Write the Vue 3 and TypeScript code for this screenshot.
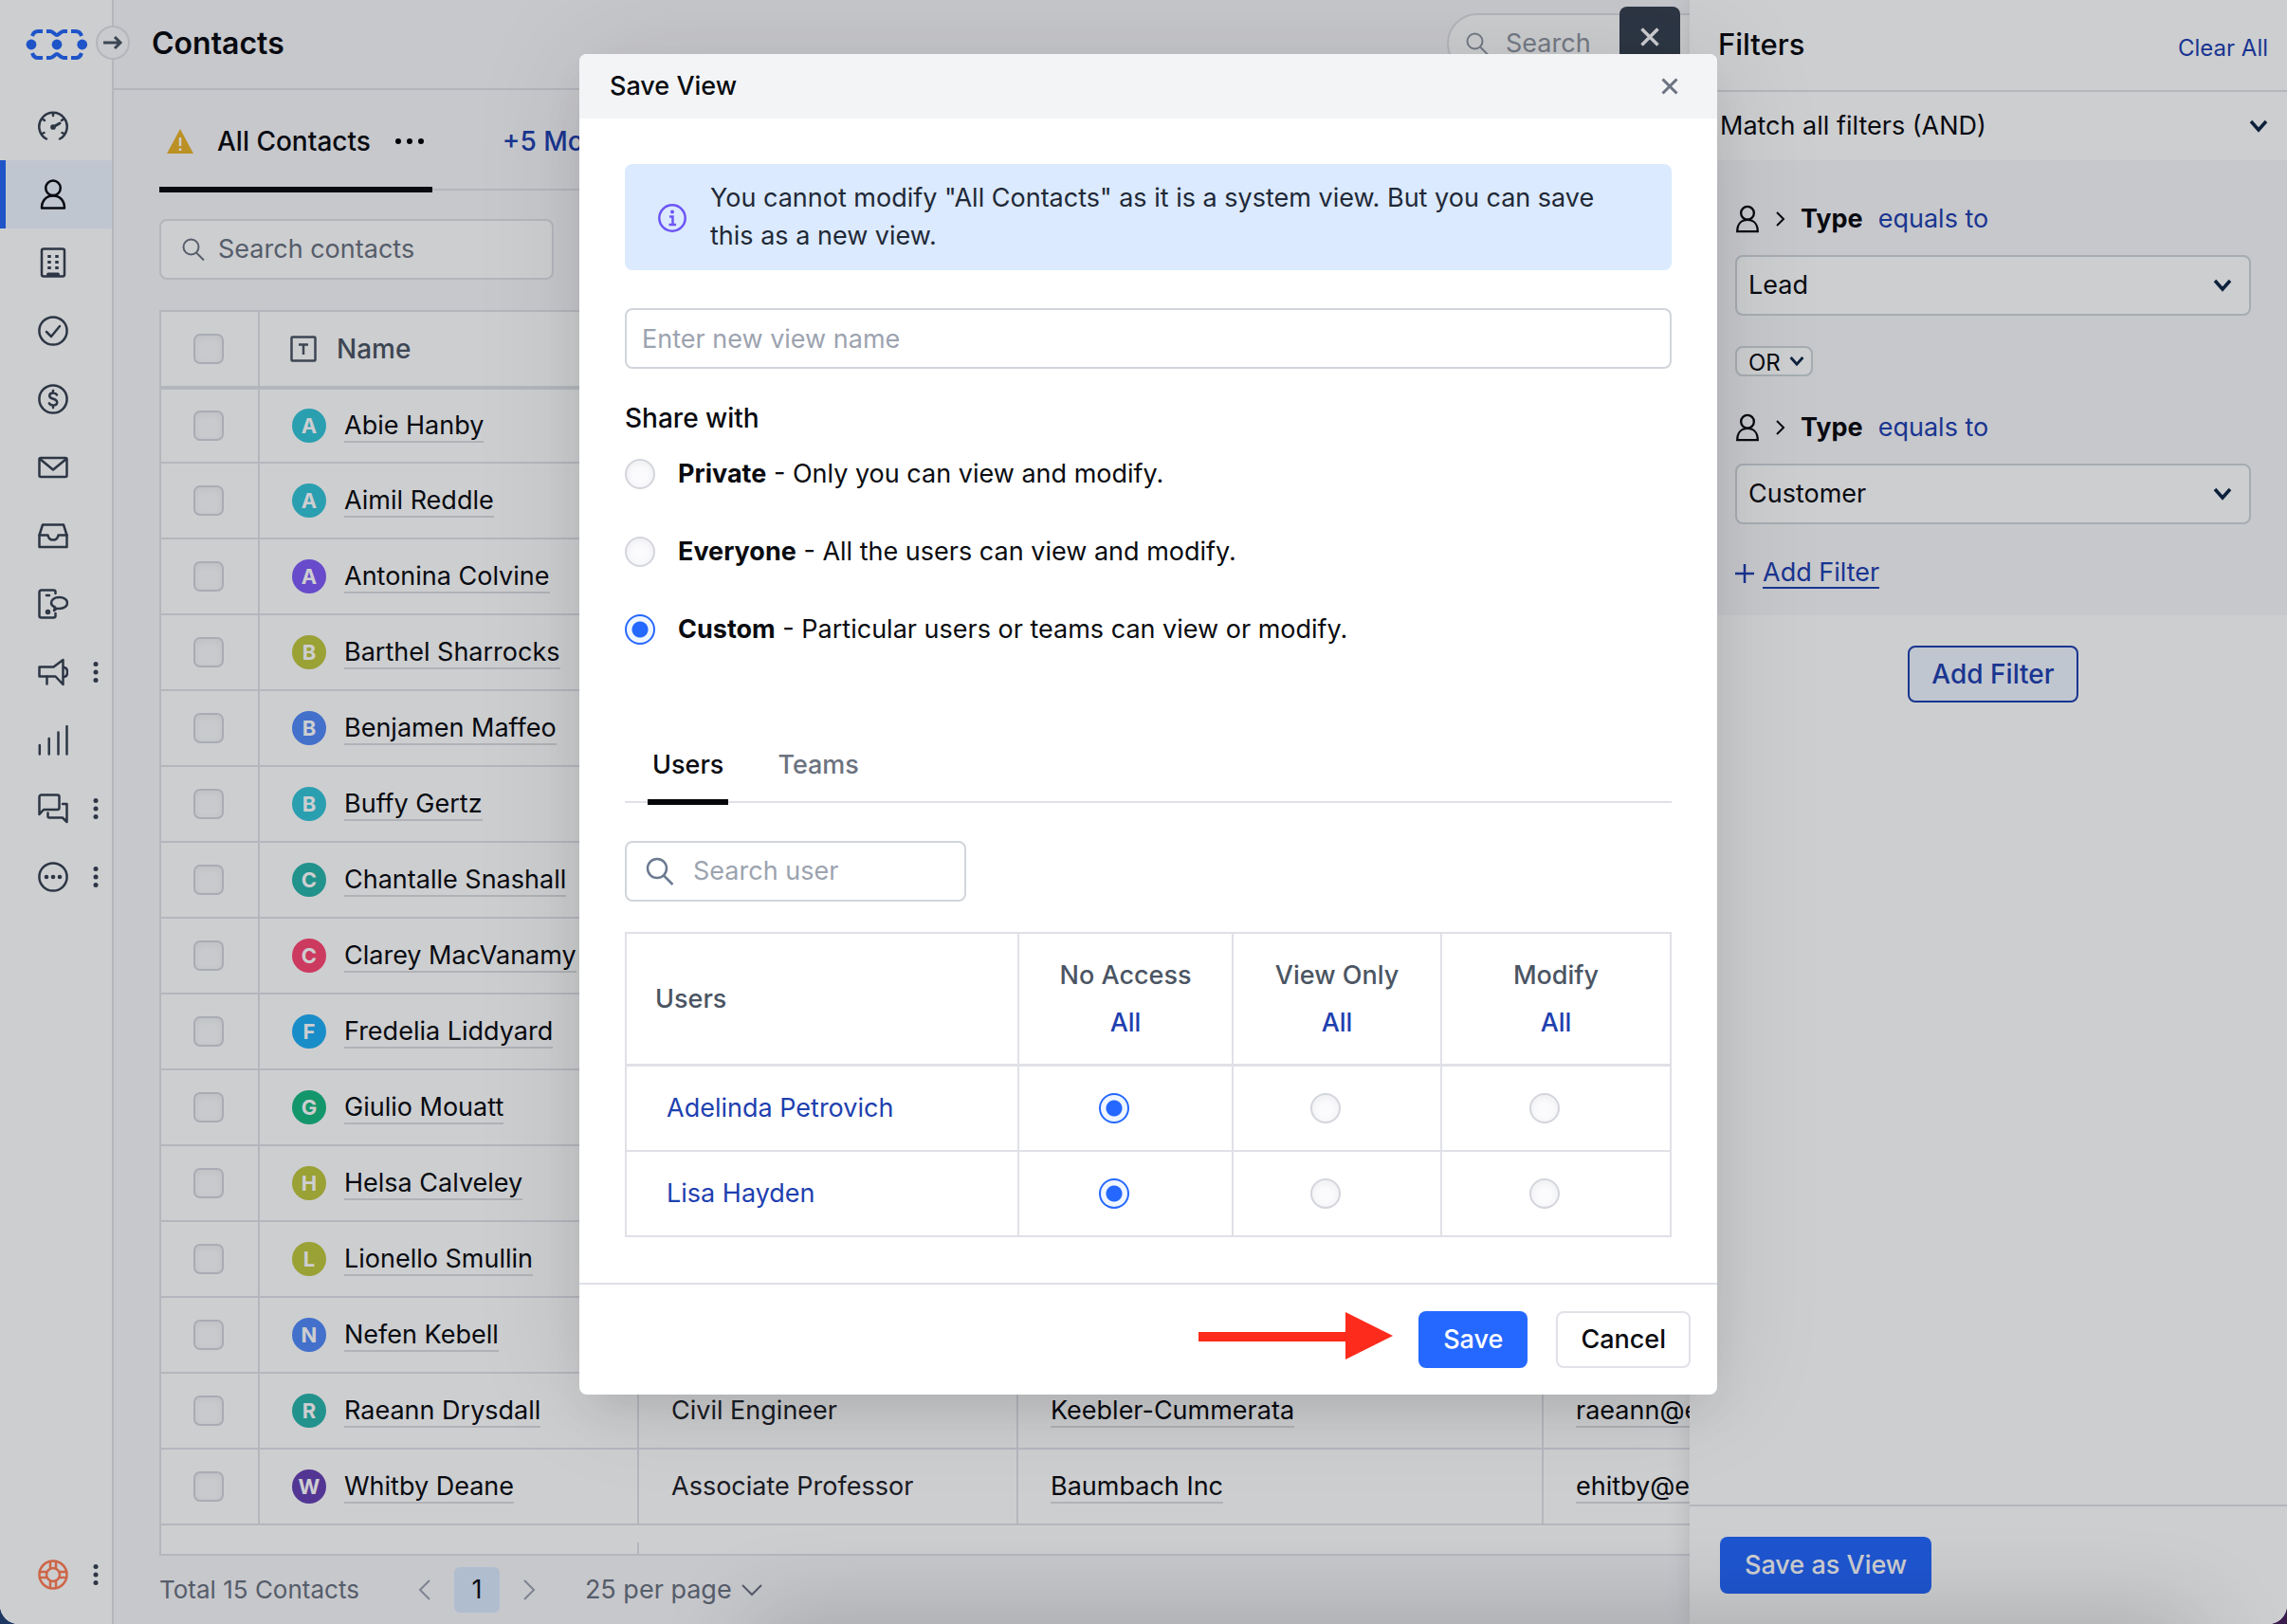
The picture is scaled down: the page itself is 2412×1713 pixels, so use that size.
<script setup lang="ts">
import { ref } from 'vue'

interface Contact {
  name: string
  color: string
  title?: string
  company?: string
  email?: string
}

const contacts: Contact[] = [
  { name: 'Abie Hanby', color: '#34c5d8' },
  { name: 'Aimil Reddle', color: '#34c5d8' },
  { name: 'Antonina Colvine', color: '#805cf8' },
  { name: 'Barthel Sharrocks', color: '#c0c73e' },
  { name: 'Benjamen Maffeo', color: '#528af9' },
  { name: 'Buffy Gertz', color: '#34c5d8' },
  { name: 'Chantalle Snashall', color: '#2ab5aa' },
  { name: 'Clarey MacVanamy', color: '#ff4673' },
  { name: 'Fredelia Liddyard', color: '#1eaef5' },
  { name: 'Giulio Mouatt', color: '#18b981' },
  { name: 'Helsa Calveley', color: '#c0c73e' },
  { name: 'Lionello Smullin', color: '#c0c73e' },
  { name: 'Nefen Kebell', color: '#528af9' },
  { name: 'Raeann Drysdall', color: '#2ab5aa', title: 'Civil Engineer', company: 'Keebler-Cummerata', email: 'raeann@example.com' },
  { name: 'Whitby Deane', color: '#6742b5', title: 'Associate Professor', company: 'Baumbach Inc', email: 'ehitby@example.com' },
]

interface NavItem {
  label: string
  icon: string
  active?: boolean
  menu?: boolean
}

const navItems: NavItem[] = [
  { label: 'Dashboard', icon: '<path d="M9 29.5A14.7 14.7 0 1 1 23 29.5"/><path d="M16 17l7-4" stroke-width="3"/><circle cx="16" cy="17" r="1.6" fill="currentColor"/><path d="M16 2.5v2.500M5.500 9l1.500 1M26.500 9L25 10M4.500 24l2-1M27.500 24l-2-1"/>' },
  { label: 'Contacts', icon: '<circle cx="16" cy="9.300" r="7.800"/><path d="M4 30.500c0-7.500 4.500-13 12-13s12 5.500 12 13z"/>', active: true },
  { label: 'Companies', icon: '<rect x="4" y="1.500" width="24" height="29" rx="2"/><path d="M12 8v3M20 8v3M12 14v3M20 14v3M12 20v3M20 20v3" stroke-width="3.500" stroke-linecap="butt"/><path d="M11 28.500h10" stroke-width="4"/>' },
  { label: 'Activities', icon: '<circle cx="16" cy="16" r="14.600"/><path d="M9 17l5 5 9-11"/>' },
  { label: 'Deals', icon: '<circle cx="16" cy="16" r="14.600"/><path d="M20 11.500c-.8-1.300-2.200-2-4-2-2.200 0-3.800 1.200-3.800 3 0 4.200 8 2.400 8 6.700 0 2-1.700 3.300-4.200 3.300-2 0-3.600-.8-4.200-2.200M16 7v2.500M16 22.500V25"/>' },
  { label: 'Mail', icon: '<rect x="1.500" y="6" width="29" height="20" rx="1.500"/><path d="M2 7l14 11.500L30 7"/>' },
  { label: 'Inbox', icon: '<path d="M1.500 15.500L5 4.500h22l3.500 11V28h-29z"/><path d="M1.500 15.500h9c.5 3 2.500 5 5.500 5s5-2 5.500-5h9"/>' },
  { label: 'Messages', icon: '<path d="M18.500 5V3.500a2 2 0 0 0-2-2h-13a2 2 0 0 0-2 2v25a2 2 0 0 0 2 2h13a2 2 0 0 0 2-2V26M9 7h3"/><path d="M17 23l1-3.500c-2.500-1-4-2.500-4-4.500 0-3.500 3.500-6 8.500-6s8.500 2.500 8.500 6-3.500 6-8.500 6c-1 0-2 0-2.500-.3z"/><circle cx="10.500" cy="24.500" r="1.500"/>' },
  { label: 'Campaigns', icon: '<path d="M1.500 10.500h15L26.500 3v26l-8-8.500h-17z"/><path d="M9.500 20.500v8M27 11c2.500 0 4 2 4 5s-1.500 5-4 5"/>', menu: true },
  { label: 'Reports', icon: '<path d="M1.800 30.500V21M11.700 30.500V14M21.500 30.500V7.500M30.500 30.500V1"/>' },
  { label: 'Conversations', icon: '<path d="M1.500 22V3.500a2 2 0 0 1 2-2h17a2 2 0 0 1 2 2v11.500a2 2 0 0 1-2 2H6z"/><path d="M26 11h4.500v19l-4.500-4.500H12a1.500 1.500 0 0 1-1.500-1.500v-3.500"/>', menu: true },
  { label: 'More', icon: '<circle cx="16" cy="16" r="14.600"/><g fill="currentColor" stroke="none"><circle cx="9" cy="16" r="2.300"/><circle cx="16" cy="16" r="2.300"/><circle cx="23" cy="16" r="2.300"/></g>', menu: true },
]

const shareOptions = [
  { value: 'private', name: 'Private', text: 'Only you can view and modify.' },
  { value: 'everyone', name: 'Everyone', text: 'All the users can view and modify.' },
  { value: 'custom', name: 'Custom', text: 'Particular users or teams can view or modify.' },
]

const accessLevels = ['No Access', 'View Only', 'Modify']
const users = ref([
  { name: 'Adelinda Petrovich', access: 'No Access' },
  { name: 'Lisa Hayden', access: 'No Access' },
])

const share = ref('custom')
const viewName = ref('')
const tab = ref('Users')
const filters = ref(['Lead', 'Customer'])

function setAll(level: string) {
  users.value.forEach((user) => (user.access = level))
}
</script>

<template>
  <div class="app">
    <aside class="sidebar">
      <div class="brand">
        <svg class="logo" width="66" height="36" viewBox="27 29 66 36" fill="none" stroke="#2567f5" stroke-width="4">
          <path d="M34 38c1-3 3-5 6-5h5M49 33h4c3 0 5 4 7 4s4-4 7-4h4M75 33h5c3 0 5 2 6 5M34 56c1 3 3 5 6 5h5M49 61h4c3 0 5-4 7-4s4 4 7 4h4M75 61h5c3 0 5-2 6-5" />
          <g fill="#2567f5" stroke="none"><circle cx="33" cy="47" r="5.400" /><circle cx="60" cy="47" r="5.400" /><circle cx="86.700" cy="47" r="5.400" /></g>
        </svg>
        <button class="expand" aria-label="Expand menu">
          <svg width="22" height="16" viewBox="0 0 22 16" fill="none" stroke="#4b5563" stroke-width="3"><path d="M1 8h18M13 2l6 6-6 6" /></svg>
        </button>
      </div>
      <nav>
        <a v-for="item in navItems" :key="item.label" href="#" class="nav-item" :class="{ active: item.active }" :aria-label="item.label">
          <svg class="line-icon" width="32" height="32" viewBox="0 0 32 32" v-html="item.icon" />
          <svg v-if="item.menu" class="kebab" width="6" height="24" viewBox="0 0 6 24"><circle cx="3" cy="3.500" r="2.500" /><circle cx="3" cy="12" r="2.500" /><circle cx="3" cy="20.500" r="2.500" /></svg>
        </a>
      </nav>
      <a href="#" class="nav-item help" aria-label="Help">
        <svg class="line-icon" width="32" height="32" viewBox="0 0 32 32">
          <circle cx="16" cy="16" r="14.500" /><circle cx="16" cy="16" r="7" />
          <path d="M13 2v7.500M19 2v7.500M13 22.500V30M19 22.500V30M2 13h7.500M2 19h7.500M22.500 13H30M22.500 19H30" />
        </svg>
        <svg class="kebab" width="6" height="24" viewBox="0 0 6 24"><circle cx="3" cy="3.500" r="2.500" /><circle cx="3" cy="12" r="2.500" /><circle cx="3" cy="20.500" r="2.500" /></svg>
      </a>
    </aside>

    <main class="main">
      <header class="topbar">
        <h1>Contacts</h1>
        <label class="global-search">
          <svg width="24" height="24" viewBox="0 0 24 24" fill="none" stroke="currentColor" stroke-width="2"><circle cx="9.500" cy="9.500" r="8" /><path d="M15 15.500l8 8" /></svg>
          <input type="search" placeholder="Search" aria-label="Search">
        </label>
      </header>

      <section class="content">
        <div class="tabs">
          <button class="tab">
            <svg width="28" height="28" viewBox="0 0 28 28"><path d="M14 1L28 27H0z" fill="#e9b32a" /><path d="M14 10v9M14 21.500v2.500" stroke="#fff" stroke-width="2.500" /></svg>
            <span>All Contacts</span>
            <svg width="32" height="8" viewBox="0 0 32 8"><circle cx="4" cy="4" r="3" /><circle cx="16" cy="4" r="3" /><circle cx="28" cy="4" r="3" /></svg>
          </button>
          <button class="more-tabs">+5 More</button>
        </div>

        <label class="contact-search">
          <svg width="24" height="24" viewBox="0 0 24 24" fill="none" stroke="currentColor" stroke-width="2"><circle cx="9.500" cy="9.500" r="8" /><path d="M15 15.500l8 8" /></svg>
          <input type="search" placeholder="Search contacts" aria-label="Search contacts">
        </label>

        <div class="grid">
          <table>
            <colgroup><col class="c-check"><col class="c-name"><col class="c-name"><col class="c-company"><col></colgroup>
            <thead>
              <tr>
                <th><input type="checkbox" aria-label="Select all"></th>
                <th>
                  <div class="name-cell head">
                    <svg width="28" height="28" viewBox="0 0 28 28" fill="none" stroke="currentColor" stroke-width="2.500"><rect x="1.500" y="1.500" width="25" height="25" rx="1" /><path d="M9 9.500h10M14 9.500V20" /></svg>
                    Name
                  </div>
                </th>
                <th /><th /><th />
              </tr>
            </thead>
            <tbody>
              <tr v-for="contact in contacts" :key="contact.name">
                <td><input type="checkbox" :aria-label="contact.name"></td>
                <td>
                  <div class="name-cell">
                    <span class="avatar" :style="{ background: contact.color }">{{ contact.name[0] }}</span>
                    <a href="#">{{ contact.name }}</a>
                  </div>
                </td>
                <td class="job">{{ contact.title }}</td>
                <td><a v-if="contact.company" href="#">{{ contact.company }}</a></td>
                <td><a v-if="contact.email" href="#">{{ contact.email }}</a></td>
              </tr>
            </tbody>
          </table>
          <div class="grid-rest"><span /></div>
        </div>

        <footer class="pager">
          <span class="total">Total 15 Contacts</span>
          <div class="pages">
            <button aria-label="Previous page"><svg width="14" height="22" viewBox="0 0 14 22"><path d="M12 1L2 11l10 10" /></svg></button>
            <button class="page">1</button>
            <button aria-label="Next page"><svg width="14" height="22" viewBox="0 0 14 22"><path d="M2 1l10 10L2 21" /></svg></button>
          </div>
          <button class="per-page">25 per page <svg width="22" height="14" viewBox="0 0 22 14"><path d="M1 2l10 10L21 2" /></svg></button>
        </footer>
      </section>
    </main>

    <aside class="drawer">
      <button class="drawer-close" aria-label="Close filters">
        <svg width="20" height="20" viewBox="0 0 20 20" fill="none" stroke="#fff" stroke-width="3.500"><path d="M1.500 1.500l17 17M18.500 1.500l-17 17" /></svg>
      </button>
      <header class="drawer-head">
        <h2>Filters</h2>
        <a href="#">Clear All</a>
      </header>
      <div class="match">
        <select aria-label="Match mode"><option>Match all filters (AND)</option></select>
        <svg class="chevron" width="20" height="14" viewBox="0 0 20 14"><path d="M2 2l8 9 8-9" /></svg>
      </div>
      <section class="group">
        <template v-for="(filter, i) in filters" :key="filter">
          <div v-if="i > 0" class="picker operator">
            <select aria-label="Operator"><option>OR</option></select>
            <svg class="chevron" width="16" height="12" viewBox="0 0 20 14"><path d="M2 2l8 9 8-9" /></svg>
          </div>
          <div class="condition">
            <svg width="26" height="30" viewBox="3 0 26 32" fill="none" stroke="currentColor" stroke-width="2.500"><circle cx="16" cy="9.300" r="7.300" /><path d="M4.500 30c0-7.500 4-13 11.500-13s11.500 5.500 11.500 13z" /></svg>
            <svg width="10" height="16" viewBox="0 0 10 16" fill="none" stroke="currentColor" stroke-width="2"><path d="M1 1l7 7-7 7" /></svg>
            <strong>Type</strong>
            <a href="#">equals to</a>
          </div>
          <div class="picker">
            <select :aria-label="'Type ' + (i + 1)"><option>{{ filter }}</option></select>
            <svg class="chevron" width="20" height="14" viewBox="0 0 20 14"><path d="M2 2l8 9 8-9" /></svg>
          </div>
        </template>
        <a href="#" class="add-link">
          <svg width="20" height="20" viewBox="0 0 20 20" stroke="currentColor" stroke-width="2.500"><path d="M10 0v20M0 10h20" /></svg>
          <span>Add Filter</span>
        </a>
      </section>
      <div class="add-row"><button class="add-button">Add Filter</button></div>
      <footer class="drawer-foot"><button class="primary">Save as View</button></footer>
    </aside>

    <div class="overlay">
      <form class="modal" role="dialog" aria-labelledby="save-title" @submit.prevent>
        <header class="modal-head">
          <h2 id="save-title">Save View</h2>
          <button type="button" aria-label="Close">
            <svg width="18" height="18" viewBox="0 0 18 18" fill="none" stroke="#6b7280" stroke-width="3"><path d="M1.500 1.500l15 15M16.500 1.500l-15 15" /></svg>
          </button>
        </header>

        <div class="modal-body">
          <p class="notice">
            <svg width="32" height="32" viewBox="0 0 32 32" fill="none" stroke="#6d55f5" stroke-width="2.500"><circle cx="16" cy="17" r="13.700" /><circle cx="16" cy="10.500" r="2" fill="#6d55f5" stroke="none" /><path d="M13 15.500h3.500v8M12.500 24h7.500" /></svg>
            <span>You cannot modify "All Contacts" as it is a system view. But you can save this as a new view.</span>
          </p>
          <input v-model="viewName" class="view-name" type="text" placeholder="Enter new view name" aria-label="View name">

          <fieldset class="share">
            <legend>Share with</legend>
            <label v-for="option in shareOptions" :key="option.value">
              <input v-model="share" type="radio" name="share" :value="option.value">
              <span><strong>{{ option.name }}</strong> - {{ option.text }}</span>
            </label>
          </fieldset>

          <div class="subtabs">
            <button v-for="name in ['Users', 'Teams']" :key="name" type="button" :class="{ current: tab === name }" @click="tab = name">{{ name }}</button>
          </div>

          <label class="user-search">
            <svg width="30" height="30" viewBox="0 0 30 30" fill="none" stroke="#6b7a90" stroke-width="2.500"><circle cx="12" cy="12" r="10" /><path d="M19 19.500l9.500 9.500" /></svg>
            <input type="search" placeholder="Search user" aria-label="Search user">
          </label>

          <table class="access">
            <colgroup><col class="a-user"><col class="a-none"><col class="a-view"><col></colgroup>
            <thead>
              <tr>
                <th>Users</th>
                <th v-for="level in accessLevels" :key="level">
                  {{ level }}
                  <button type="button" @click="setAll(level)">All</button>
                </th>
              </tr>
            </thead>
            <tbody>
              <tr v-for="user in users" :key="user.name">
                <td><a href="#">{{ user.name }}</a></td>
                <td v-for="level in accessLevels" :key="level">
                  <input v-model="user.access" type="radio" :name="user.name" :value="level" :aria-label="user.name + ': ' + level">
                </td>
              </tr>
            </tbody>
          </table>
        </div>

        <footer class="modal-foot">
          <svg class="arrow" width="205" height="60" viewBox="0 0 205 60" fill="#fc2b1c"><path d="M0 22h155V1l50 25-50 25V32H0z" /></svg>
          <button class="primary save" type="submit">Save</button>
          <button class="cancel" type="button">Cancel</button>
        </footer>
      </form>
    </div>
  </div>
</template>

<style>
body {
  background: linear-gradient(90deg, #1f3763 50%, #3a1d4d 50%);
}
</style>

<style scoped>
.app,
.app :deep(*) {
  box-sizing: border-box;
}

.app {
  position: relative;
  display: flex;
  min-height: 100vh;
  overflow: hidden;
  border-radius: 0 0 20px 20px;
  background: #f8f8fb;
  color: #090b10;
  font-family: Inter, "Liberation Sans", sans-serif;
  font-size: 27px;
  line-height: 40px;
}

h1,
h2,
p {
  margin: 0;
}

h1 {
  font-size: 32px;
  font-weight: 600;
}

a {
  color: inherit;
  text-decoration: none;
}

button,
input,
select {
  margin: 0;
  padding: 0;
  border: 0;
  background: none;
  color: inherit;
  font: inherit;
}

button {
  display: inline-flex;
  align-items: center;
  justify-content: center;
}

svg {
  flex: none;
}

input[type="search"] {
  flex: 1;
  min-width: 0;
  appearance: none;
  outline: 0;
}

input[type="checkbox"],
input[type="radio"] {
  display: block;
  flex: none;
  width: 32px;
  height: 32px;
  appearance: none;
  border: 2px solid #d3d5dc;
  background: #fbfbfd;
  box-shadow: inset 0 2px 8px rgba(0, 0, 0, 0.06);
}

input[type="checkbox"] {
  border-radius: 7px;
}

input[type="radio"] {
  border-radius: 50%;
}

input[type="radio"]:checked {
  border: 2px solid #2568ff;
  background: radial-gradient(circle, #2568ff 8px, #eff6ff 9px);
  box-shadow: none;
}

/* sidebar */
.sidebar {
  display: flex;
  flex: none;
  flex-direction: column;
  width: 120px;
  border-right: 2px solid #e1e1e6;
  background: #fff;
}

.brand {
  position: relative;
  height: 97px;
  padding: 29px 0 0 27px;
}

.logo {
  display: block;
}

.expand {
  position: absolute;
  top: 27px;
  left: 101px;
  width: 36px;
  height: 36px;
  border: 2px solid #e1e1e6;
  border-radius: 50%;
  background: #fbfbfc;
}

.nav-item {
  display: flex;
  align-items: center;
  gap: 26px;
  height: 72px;
  padding-left: 34px;
  border-left: 6px solid transparent;
  color: #374151;
}

.nav-item.active {
  border-color: #2567f5;
  background: #eff6ff;
  color: #090b10;
}

.line-icon {
  fill: none;
  stroke: currentColor;
  stroke-width: 2.5;
  stroke-linecap: round;
  stroke-linejoin: round;
}

.kebab {
  fill: #374151;
}

.help {
  margin: auto 0 16px;
  color: #ff7d55;
}

/* contacts page */
.main {
  display: flex;
  flex: 1;
  flex-direction: column;
  min-width: 0;
}

.topbar {
  display: flex;
  align-items: center;
  justify-content: space-between;
  height: 95px;
  padding: 0 286px 2px 40px;
  border-bottom: 2px solid #e1e1e6;
}

.global-search {
  display: flex;
  align-items: center;
  gap: 18px;
  width: 600px;
  height: 64px;
  padding: 0 18px;
  border: 2px solid #e1e1e6;
  border-radius: 32px;
  background: #fff;
  color: #9097a3;
}

.global-search input::placeholder {
  color: #9097a3;
  opacity: 1;
}

.content {
  display: flex;
  flex: 1;
  flex-direction: column;
  padding-left: 48px;
}

.tabs {
  display: flex;
  gap: 74px;
  height: 108px;
  background: linear-gradient(#e1e1e6, #e1e1e6) 0 104px / 100% 2px no-repeat;
  font-size: 28px;
  font-weight: 500;
}

.tab {
  gap: 25px;
  padding: 6px 8px 0;
  border-bottom: 6px solid #090b10;
}

.more-tabs {
  color: #1e40af;
}

.contact-search {
  display: flex;
  align-items: center;
  gap: 14px;
  width: 416px;
  height: 64px;
  margin: 28px 0 32px;
  padding: 0 22px;
  border: 2px solid #e1e1e6;
  border-radius: 8px;
  background: #fff;
  color: #6b7280;
}

.contact-search input::placeholder {
  color: #6b7280;
  opacity: 1;
}

.grid {
  display: flex;
  flex: 1;
  flex-direction: column;
  border: 2px solid #e1e1e8;
  border-right: 0;
  background: #fff;
}

.grid table,
.access {
  width: 100%;
  table-layout: fixed;
  border-collapse: separate;
  border-spacing: 0;
}

.c-check {
  width: 104px;
}

.c-name {
  width: 400px;
}

.c-company {
  width: 554px;
}

.grid th,
.grid td {
  height: 80px;
  padding: 0 34px;
  border-right: 2px solid #e1e1e8;
  border-bottom: 2px solid #e1e1e8;
  text-align: left;
  font-weight: 400;
}

.grid th {
  height: 82px;
  border-bottom: 4px solid #dfe3e8;
}

.grid th + th {
  padding-left: 32px;
}

.grid tbody tr:first-child td {
  height: 78px;
}

.name-cell {
  display: flex;
  align-items: center;
  gap: 19px;
}

.name-cell.head {
  gap: 21px;
  color: #4b5563;
  font-size: 28px;
  font-weight: 500;
}

.avatar {
  flex: none;
  width: 36px;
  height: 36px;
  border-radius: 50%;
  color: #fff;
  font-size: 22px;
  font-weight: 700;
  line-height: 36px;
  text-align: center;
}

.grid td a {
  display: inline-block;
  padding-top: 2px;
  border-bottom: 2px solid #dbdde0;
  line-height: 32px;
  white-space: nowrap;
}

.grid .job {
  color: #1f2228;
}

.grid-rest {
  display: flex;
  flex: 1;
  align-items: flex-end;
  min-height: 30px;
}

.grid-rest span {
  width: 504px;
  height: 12px;
  border-right: 2px solid #e1e1e8;
}

.pager {
  display: flex;
  align-items: center;
  height: 72px;
  color: #6b7280;
}

.total {
  font-size: 26px;
}

.pages {
  display: flex;
  align-items: center;
  gap: 24px;
  margin: 0 52px 0 62px;
}

.page {
  width: 48px;
  height: 48px;
  border-radius: 6px;
  background: #dbeafe;
  color: #090b10;
}

.pages path,
.per-page path {
  fill: none;
  stroke: #9ca3af;
  stroke-width: 2;
}

.per-page {
  gap: 10px;
}

.per-page path {
  stroke: #6b7280;
}

/* filter drawer */
.drawer {
  position: absolute;
  top: 0;
  right: 0;
  bottom: 0;
  display: flex;
  flex-direction: column;
  width: 630px;
  background: #fff;
  box-shadow: 0 0 24px rgba(0, 0, 0, 0.12);
}

.drawer-close {
  position: absolute;
  top: 7px;
  left: -74px;
  width: 64px;
  height: 64px;
  border-radius: 8px;
  background: #374151;
}

.drawer-head {
  display: flex;
  align-items: flex-end;
  justify-content: space-between;
  height: 97px;
  padding: 0 20px 28px 30px;
  border-bottom: 2px solid #e1e1e6;
}

.drawer-head h2 {
  font-size: 31px;
  font-weight: 500;
}

.drawer-head a {
  color: #1e40af;
  font-size: 24px;
  line-height: 32px;
}

.match,
.picker {
  position: relative;
  display: flex;
  align-items: center;
}

.match {
  height: 72px;
  padding: 0 20px 0 32px;
}

select {
  flex: 1;
  appearance: none;
}

.chevron {
  position: absolute;
  right: 20px;
  fill: none;
  stroke: #0f2747;
  stroke-width: 3.5;
  pointer-events: none;
}

.group {
  padding: 40px 38px 24px 48px;
  background: #f8f8fb;
}

.picker select {
  height: 64px;
  padding-left: 12px;
  border: 2px solid #cfd6da;
  border-radius: 8px;
  background: #fff;
}

.picker.operator {
  width: 82px;
  margin: 32px 0;
}

.picker.operator select {
  height: 32px;
  padding-top: 4px;
  font-size: 24px;
  line-height: 24px;
}

.operator .chevron {
  right: 9px;
}

.condition {
  display: flex;
  align-items: center;
  height: 44px;
  margin-bottom: 16px;
}

.condition strong {
  margin: 0 16px;
}

.condition svg + svg {
  margin-left: 17px;
}

.condition a,
.add-link {
  color: #1e40af;
}

.add-link {
  display: flex;
  align-items: center;
  gap: 9px;
  height: 40px;
  margin-top: 32px;
}

.add-link span {
  border-bottom: 2px solid currentColor;
  line-height: 30px;
}

.add-row {
  display: flex;
  flex: 1;
  align-items: flex-start;
  justify-content: center;
  padding: 32px 38px 32px 48px;
}

.add-button {
  width: 180px;
  height: 60px;
  border: 2px solid #1e40af;
  border-radius: 8px;
  background: #eff6ff;
  color: #1e40af;
  font-size: 28px;
  font-weight: 500;
}

.drawer-foot {
  padding: 32px;
  border-top: 2px solid #e1e1e6;
}

.primary {
  height: 60px;
  padding: 0 26px;
  border-radius: 8px;
  background: #2568ff;
  color: #fff;
  font-weight: 500;
}

/* modal */
.overlay {
  position: absolute;
  inset: 0;
  display: flex;
  align-items: flex-start;
  justify-content: center;
  padding: 57px 0 0 10px;
  background: rgba(5, 10, 20, 0.2);
}

/* shade rising from the lower edge of the window */
.overlay::after {
  content: "";
  position: absolute;
  top: 100%;
  left: 33%;
  right: 4%;
  height: 80px;
  box-shadow: 0 0 100px rgba(0, 0, 0, 0.22);
}

.modal {
  width: 1200px;
  max-width: 96%;
  border-radius: 8px;
  background: #fff;
  box-shadow: 0 24px 48px -12px rgba(0, 0, 0, 0.1), 0 0 120px rgba(0, 0, 0, 0.1);
}

.modal-head {
  display: flex;
  align-items: center;
  justify-content: space-between;
  height: 68px;
  padding: 0 41px 0 32px;
  border-radius: 8px 8px 0 0;
  background: #f3f4f6;
}

.modal-head h2 {
  font-size: 27px;
  font-weight: 500;
}

.modal-body {
  padding: 48px;
}

.notice {
  display: flex;
  align-items: center;
  gap: 24px;
  padding: 16px 60px 16px 34px;
  border-radius: 8px;
  background: #dbeafe;
  color: #1f2937;
}

.view-name {
  width: 100%;
  height: 64px;
  margin-top: 40px;
  padding: 0 16px;
  border: 2px solid #d1d5db;
  border-radius: 8px;
}

.view-name::placeholder,
.user-search input::placeholder {
  color: #9ca3af;
  opacity: 1;
}

.share {
  margin: 32px 0 91px;
  padding: 0;
  border: 0;
}

.share legend {
  padding: 0;
  font-size: 28px;
  font-weight: 500;
}

.share label {
  display: flex;
  align-items: center;
  gap: 24px;
  height: 32px;
  margin-top: 50px;
}

.share legend + label {
  margin-top: 23px;
}

.subtabs {
  display: flex;
  gap: 47px;
  padding-left: 24px;
  background: linear-gradient(#e0e2e7, #e0e2e7) 0 74px / 100% 2px no-repeat;
}

.subtabs button {
  padding: 16px 5px;
  border-bottom: 6px solid transparent;
  color: #6b7280;
  font-weight: 500;
}

.subtabs .current {
  border-color: #05060a;
  color: #090b10;
}

.user-search {
  display: flex;
  align-items: center;
  gap: 20px;
  width: 360px;
  height: 64px;
  margin: 38px 0 32px;
  padding: 0 20px;
  border: 2px solid #d1d5db;
  border-radius: 8px;
}

.access {
  border: solid #e0e1e7;
  border-width: 2px 0 0 2px;
}

.a-user {
  width: 414px;
}

.a-none {
  width: 226px;
}

.a-view {
  width: 220px;
}

.access th,
.access td {
  height: 90px;
  padding: 0;
  border-right: 2px solid #e0e1e7;
  border-bottom: 2px solid #e0e1e7;
}

.access th {
  height: 140px;
  border-bottom-width: 3px;
  color: #4b5563;
  font-weight: 500;
  line-height: 50px;
}

.access th:first-child {
  padding-left: 30px;
  text-align: left;
}

.access th button {
  display: block;
  margin: 0 auto;
  color: #1e40af;
}

.access td:first-child {
  padding-left: 42px;
}

.access td a {
  color: #1e40af;
}

.access td:not(:first-child) {
  padding-right: 24px;
}

.access td input {
  margin: 0 auto;
}

.modal-foot {
  display: flex;
  align-items: center;
  justify-content: flex-end;
  padding: 28px;
  border-top: 2px solid #e0e1e7;
}

.arrow {
  margin-right: 27px;
}

.save {
  margin-right: 30px;
}

.cancel {
  height: 60px;
  padding: 0 24px;
  border: 2px solid #e0e2e7;
  border-radius: 8px;
  font-weight: 500;
}
</style>
